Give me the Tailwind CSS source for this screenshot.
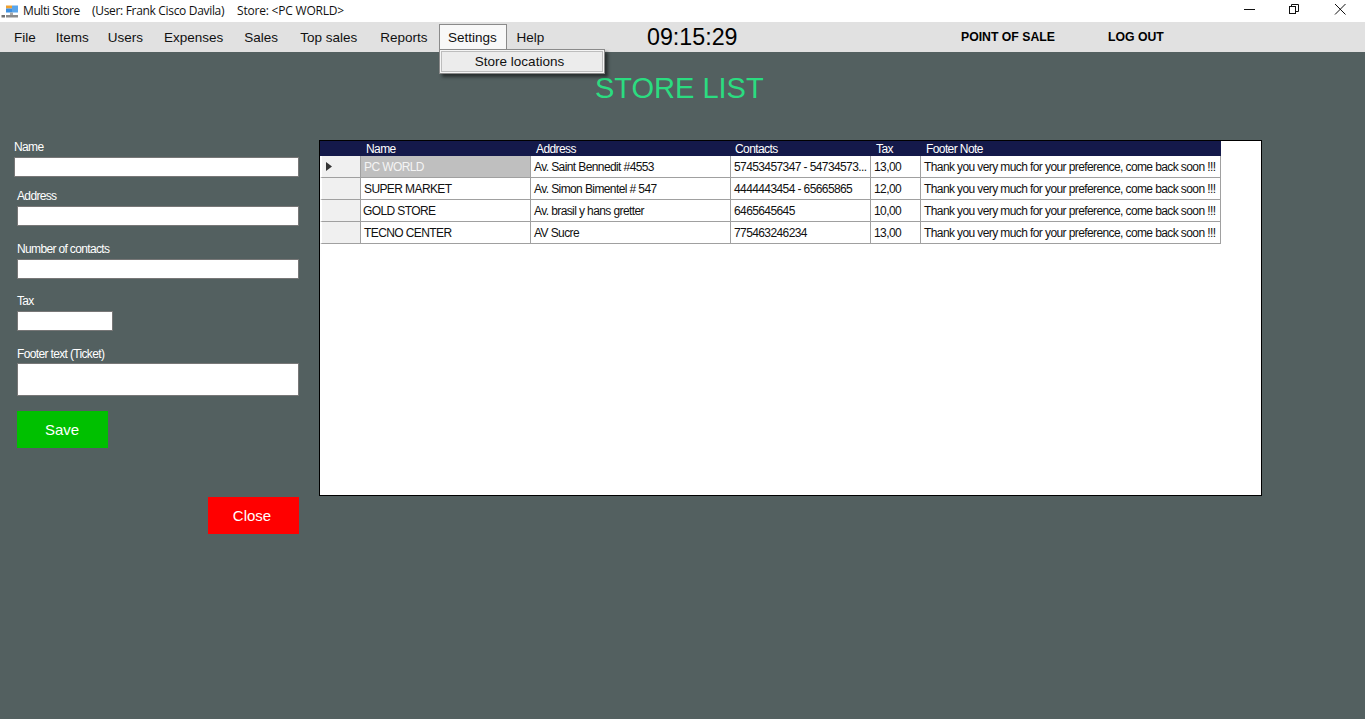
<!DOCTYPE html>
<html>
<head>
<meta charset="utf-8">
<script src="https://cdn.jsdelivr.net/npm/@tailwindcss/browser@4"></script>
</head>
<body class="w-[1365px] h-[719px] overflow-hidden bg-[#536060] font-['Liberation_Sans',Arial,sans-serif]">
<!-- title bar -->
<div class="h-[22px] bg-white flex items-center relative text-[12px] text-[#111] font-['Open_Sans','Liberation_Sans',sans-serif]">
  <svg class="ml-[1px] w-[19px] h-[19px]" viewBox="0 0 19 19">
    <rect x="5" y="3.5" width="6" height="3" fill="#f0a030"/>
    <rect x="11" y="3.5" width="6" height="7" fill="#5aa5ea"/>
    <rect x="5" y="6.5" width="6" height="4" fill="#3d8fe0"/>
    <rect x="9" y="10.5" width="3" height="2.5" fill="#a8a8a8"/>
    <rect x="5" y="13" width="12" height="2.5" fill="#8a8a8a"/>
    <rect x="0.5" y="13" width="3.5" height="2.5" fill="#707070"/>
  </svg>
  <span class="ml-[3px] w-[69px] tracking-[-0.4px]">Multi Store</span>
  <span class="w-[145px] tracking-[-0.32px]">(User: Frank Cisco Davila)</span>
  <span class="tracking-[-0.2px]">Store: &lt;PC WORLD&gt;</span>
  <div class="ml-auto flex items-center">
    <svg class="w-[46px] h-[22px]" viewBox="0 0 46 22"><rect x="17" y="9" width="11" height="1" fill="#111"/></svg>
    <svg class="w-[46px] h-[22px]" viewBox="0 0 46 22" fill="none" stroke="#111"><rect x="16.5" y="6.5" width="6" height="7" fill="#fff"/><path d="M18.5 6.5V4.5H25.5V11.5H22.5"/></svg>
    <svg class="w-[46px] h-[22px]" viewBox="0 0 46 22" fill="none" stroke="#111"><path d="M16 4L26.5 14.5M26.5 4L16 14.5"/></svg>
  </div>
</div>
<!-- menu bar -->
<div class="h-[30px] pt-[2px] bg-[#e1e1e1] flex items-center relative text-[13.5px] text-[#111]">
  <span class="ml-[14px]">File</span>
  <span class="ml-[20px]">Items</span>
  <span class="ml-[19px]">Users</span>
  <span class="ml-[21px]">Expenses</span>
  <span class="ml-[21px]">Sales</span>
  <span class="ml-[22px]">Top sales</span>
  <span class="ml-[23px]">Reports</span>
  <div class="relative self-start ml-[12px] h-[28px] w-[68px] pr-[2px] border border-b-0 border-[#8a8a8a] bg-[#f8f8f8] flex items-center justify-center">Settings</div>
  <span class="ml-[9px]">Help</span>
  <span class="absolute left-[647px] top-[0px] h-[30px] leading-[30px] text-[23.25px] text-black">09:15:29</span>
  <span class="absolute left-[961px] top-[0px] h-[30px] leading-[31px] text-[12.25px] font-bold text-black">POINT OF SALE</span>
  <span class="absolute left-[1108px] top-[0px] h-[30px] leading-[31px] text-[12.25px] font-bold text-black">LOG OUT</span>
  <!-- dropdown -->
  <div class="absolute left-[439px] top-[27px] w-[166px] h-[25px] bg-[#f5f5f5] border border-[#8a8a8a] p-[1px] shadow-[3px_3px_3px_rgba(0,0,0,0.5)] z-10">
    <div class="h-full pr-[5px] pt-[1px] border border-[#bdbdbd] bg-[#ececec] flex items-center justify-center text-[13.5px] text-[#111]">Store locations</div>
  </div>
</div>
<!-- title -->
<div class="h-[88px] relative">
  <h1 class="absolute left-[595px] top-[19px] text-[29px] leading-[34px] text-[#2bdc80]">STORE LIST</h1>
</div>
<!-- content -->
<div class="flex items-start">
  <div class="w-[319px] shrink-0 relative h-[410px] text-[12px] tracking-[-0.65px] text-white">
    <div class="pl-[14px]">
      <div class="h-[17px] leading-[14px]">Name</div>
      <div class="w-[285px] h-[20px] bg-white border border-[#777]"></div>
    </div>
    <div class="pl-[17px] mt-[11px]">
      <div class="h-[18px] leading-[16px]">Address</div>
      <div class="w-[282px] h-[20px] bg-white border border-[#777]"></div>
    </div>
    <div class="pl-[17px] mt-[15px]">
      <div class="h-[18px] leading-[16px]">Number of contacts</div>
      <div class="w-[282px] h-[20px] bg-white border border-[#777]"></div>
    </div>
    <div class="pl-[17px] mt-[14px]">
      <div class="h-[18px] leading-[16px]">Tax</div>
      <div class="w-[96px] h-[20px] bg-white border border-[#777]"></div>
    </div>
    <div class="pl-[17px] mt-[14px]">
      <div class="h-[18px] leading-[18px]">Footer text (Ticket)</div>
      <div class="w-[282px] h-[33px] bg-white border border-[#777]"></div>
    </div>
    <div class="pl-[17px] mt-[15px]">
      <div class="w-[91px] h-[37px] pr-[1px] pt-[2px] bg-[#00c000] flex items-center justify-center text-[15px] tracking-normal">Save</div>
    </div>
    <div class="pl-[208px] mt-[49px]">
      <div class="w-[91px] h-[37px] pr-[3px] pt-[2px] bg-[#ff0000] flex items-center justify-center text-[15px] tracking-normal">Close</div>
    </div>
  </div>
  <!-- grid -->
  <div class="w-[943px] h-[356px] bg-white border border-black text-[12px] tracking-[-0.6px] text-[#111]">
    <div class="w-[901px] h-[15px] bg-[#14194a] text-white flex leading-[16px]">
      <div class="w-[40px]"></div>
      <div class="w-[171px] pl-[6px]">Name</div>
      <div class="w-[199px] pl-[5px]">Address</div>
      <div class="w-[141px] pl-[5px]">Contacts</div>
      <div class="w-[50px] pl-[5px]">Tax</div>
      <div class="w-[300px] pl-[5px]">Footer Note</div>
    </div>
    <div class="w-[901px] grid grid-cols-[41px_170px_200px_140px_50px_300px] auto-rows-[22px] leading-[22px]">
      <div class="bg-[#f0f0f0] border-r border-b border-[#a0a0a0] border-l-[2px] border-l-white flex items-center pl-[4px]"><svg class="w-[6px] h-[9px]" viewBox="0 0 6 9"><path d="M0 0L6 4.5L0 9Z" fill="#333"/></svg></div>
      <div class="bg-[#bfbfbf] text-[#f4f4f4] border-r border-b border-[#a0a0a0] pl-[3px]">PC WORLD</div>
      <div class="border-r border-b border-[#a0a0a0] pl-[3px]">Av. Saint Bennedit #4553</div>
      <div class="border-r border-b border-[#a0a0a0] pl-[3px] whitespace-nowrap">57453457347 - 54734573...</div>
      <div class="border-r border-b border-[#a0a0a0] pl-[3px]">13,00</div>
      <div class="border-r border-b border-[#a0a0a0] pl-[3px] whitespace-nowrap">Thank you very much for your preference, come back soon !!!</div>

      <div class="bg-[#f0f0f0] border-r border-b border-[#a0a0a0] border-l-[2px] border-l-white"></div>
      <div class="border-r border-b border-[#a0a0a0] pl-[3px]">SUPER MARKET</div>
      <div class="border-r border-b border-[#a0a0a0] pl-[3px]">Av. Simon Bimentel # 547</div>
      <div class="border-r border-b border-[#a0a0a0] pl-[3px] whitespace-nowrap">4444443454 - 65665865</div>
      <div class="border-r border-b border-[#a0a0a0] pl-[3px]">12,00</div>
      <div class="border-r border-b border-[#a0a0a0] pl-[3px] whitespace-nowrap">Thank you very much for your preference, come back soon !!!</div>

      <div class="bg-[#f0f0f0] border-r border-b border-[#a0a0a0] border-l-[2px] border-l-white"></div>
      <div class="border-r border-b border-[#a0a0a0] pl-[2px]">GOLD STORE</div>
      <div class="border-r border-b border-[#a0a0a0] pl-[3px]">Av. brasil y hans gretter</div>
      <div class="border-r border-b border-[#a0a0a0] pl-[3px] whitespace-nowrap">6465645645</div>
      <div class="border-r border-b border-[#a0a0a0] pl-[3px]">10,00</div>
      <div class="border-r border-b border-[#a0a0a0] pl-[3px] whitespace-nowrap">Thank you very much for your preference, come back soon !!!</div>

      <div class="bg-[#f0f0f0] border-r border-b border-[#a0a0a0] border-l-[2px] border-l-white"></div>
      <div class="border-r border-b border-[#a0a0a0] pl-[3px]">TECNO CENTER</div>
      <div class="border-r border-b border-[#a0a0a0] pl-[3px]">AV Sucre</div>
      <div class="border-r border-b border-[#a0a0a0] pl-[3px] whitespace-nowrap">775463246234</div>
      <div class="border-r border-b border-[#a0a0a0] pl-[3px]">13,00</div>
      <div class="border-r border-b border-[#a0a0a0] pl-[3px] whitespace-nowrap">Thank you very much for your preference, come back soon !!!</div>
    </div>
  </div>
</div>
</body>
</html>
